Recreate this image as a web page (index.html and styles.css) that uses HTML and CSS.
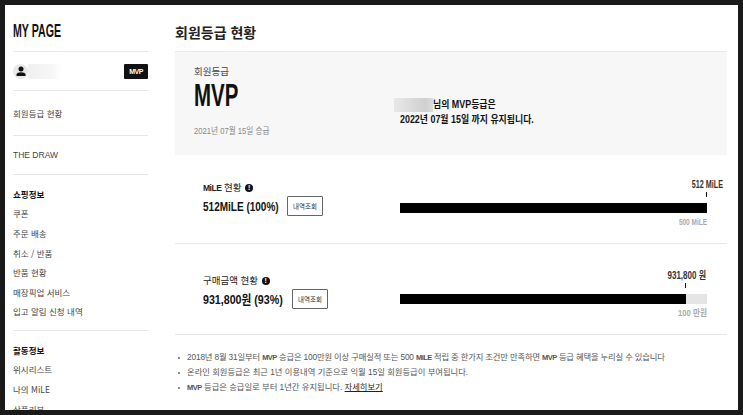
FILE: index.html
```html
<!DOCTYPE html>
<html lang="ko">
<head>
    <meta charset="UTF-8">
    <meta name="viewport" content="width=device-width, initial-scale=1.0">
    <title>MY PAGE</title>
    <link rel="stylesheet" href="styles.css">
</head>
<body>
    <div class="page">
        <aside class="sidebar">
            <h2 class="side-title"><span>MY PAGE</span></h2>
            <div class="profile">
                <span class="avatar">
                    <svg width="10" height="10" viewBox="0 0 10 10"><circle cx="5" cy="3" r="2.5" fill="#111"/><path d="M0.5 10V8.6C0.5 7 3 6.3 5 6.3S9.5 7 9.5 8.6V10Z" fill="#111"/></svg>
                </span>
                <span class="blur-name"></span>
                <span class="badge">MVP</span>
            </div>
            <div class="side-block single"><a>회원등급 현황</a></div>
            <div class="side-block single draw"><a>THE DRAW</a></div>
            <div class="side-block">
                <h3>쇼핑정보</h3>
                <a>쿠폰</a>
                <a>주문 배송</a>
                <a>취소 / 반품</a>
                <a>반품 현황</a>
                <a>매장픽업 서비스</a>
                <a>입고 알림 신청 내역</a>
            </div>
            <div class="side-block">
                <h3>활동정보</h3>
                <a>위시리스트</a>
                <a>나의 MiLE</a>
                <a>상품리뷰</a>
            </div>
        </aside>

        <main class="content">
            <h1 class="page-title">회원등급 현황</h1>

            <section class="hero">
                <div class="hero-left">
                    <p class="hero-label">회원등급</p>
                    <p class="hero-grade">MVP</p>
                    <p class="hero-date">2021년 07월 15일 승급</p>
                </div>
                <div class="hero-right">
                    <div class="hero-first">
                        <span class="blur-name wide"></span>
                        <p class="hero-line short">님의 MVP등급은</p>
                    </div>
                    <p class="hero-line">2022년 07월 15일 까지 유지됩니다.</p>
                </div>
            </section>

            <section class="stat stat-mile">
                <div class="stat-info">
                    <p class="stat-label"><span class="latin">MiLE</span> 현황 <i class="info">!</i></p>
                    <div class="stat-value">
                        <strong>512MiLE (100%)</strong>
                        <button class="history-btn">내역조회</button>
                    </div>
                </div>
                <div class="stat-graph">
                    <p class="graph-now mile-now">512 MiLE</p>
                    <div class="track">
                        <div class="fill" style="width: 100%"><span class="tick"></span></div>
                    </div>
                    <p class="graph-goal">500 MiLE</p>
                </div>
            </section>

            <section class="stat stat-buy">
                <div class="stat-info">
                    <p class="stat-label">구매금액 현황 <i class="info">!</i></p>
                    <div class="stat-value">
                        <strong>931,800원 (93%)</strong>
                        <button class="history-btn">내역조회</button>
                    </div>
                </div>
                <div class="stat-graph">
                    <p class="graph-now buy-now">931,800 원</p>
                    <div class="track">
                        <div class="fill" style="width: 93%"><span class="tick"></span></div>
                    </div>
                    <p class="graph-goal">100 만원</p>
                </div>
            </section>

            <ul class="notes">
                <li>2018년 8월 31일부터 <span class="latin">MVP</span> 승급은 100만원 이상 구매실적 또는 500 <span class="latin">MiLE</span> 적립 중 한가지 조건만 만족하면 <span class="latin">MVP</span> 등급 혜택을 누리실 수 있습니다</li>
                <li>온라인 회원등급은 최근 1년 이용내역 기준으로 익월 15일 회원등급이 부여됩니다.</li>
                <li><span class="latin">MVP</span> 등급은 승급일로 부터 1년간 유지됩니다. <a>자세히보기</a></li>
            </ul>
        </main>
    </div>
</body>
</html>
```

FILE: styles.css
```css
* {
    box-sizing: border-box;
}
html, body {
    height: 100%;
    margin: 0;
    overflow: hidden;
}
body {
    background: #1a1a1a;
    padding: 5px;
    font-family: "Liberation Sans", "Noto Sans CJK KR", sans-serif;
    color: #111;
}
p, h1, h2, h3, ul {
    margin: 0;
    padding: 0;
    font-weight: normal;
}
.page {
    display: flex;
    width: 733px;
    height: 405px;
    background: white;
    overflow: hidden;
}
.latin {
    letter-spacing: -0.5px;
    font-size: 0.9em;
    font-weight: bold;
}

/* left menu */
.sidebar {
    width: 135px;
    margin-left: 8px;
    flex-shrink: 0;
}
.side-title {
    height: 47px;
    border-bottom: 1px solid #e8e8e8;
    padding-top: 15px;
    font-size: 18px;
    line-height: 22px;
    font-weight: bold;
    white-space: nowrap;
}
.side-title span {
    display: inline-block;
    transform: scaleX(0.59);
    transform-origin: left;
}
.profile {
    display: flex;
    align-items: center;
    height: 39px;
    border-bottom: 1px solid #e8e8e8;
}
.avatar {
    display: flex;
    align-items: center;
    justify-content: center;
    width: 15px;
    height: 15px;
    border-radius: 50%;
    background: #e8e8e8;
}
.blur-name {
    display: inline-block;
    width: 33px;
    height: 15px;
    background: linear-gradient(90deg, #f0f0f0, #f6f6f6 70%, #fff);
}
.blur-name.wide {
    width: 39px;
    height: 14px;
    background: linear-gradient(90deg, #e8e8e8, #d0d0d0 80%, #dcdcdc);
}
.badge {
    margin-left: auto;
    width: 24px;
    height: 15px;
    background: #111;
    color: white;
    border-radius: 1px;
    font-size: 7px;
    font-weight: bold;
    letter-spacing: -0.5px;
    line-height: 15px;
    text-align: center;
}
.side-block {
    border-bottom: 1px solid #e8e8e8;
    padding: 10px 0 8px;
}
.side-block.single {
    padding: 13px 0 11.4px;
}
.side-block.draw {
    padding: 10px 0 8.4px;
}
.side-block h3 {
    font-size: 8.5px;
    line-height: 19.4px;
    font-weight: bold;
    font-family: "Noto Sans CJK KR", sans-serif;
}
.side-block a {
    display: block;
    font-size: 8.5px;
    line-height: 19.6px;
    color: #444;
    font-family: "Noto Sans CJK KR", sans-serif;
}
.side-block.draw a {
    font-family: "Liberation Sans", sans-serif;
    font-size: 8.5px;
}

/* main area */
.content {
    width: 552px;
    margin-left: 27px;
    flex-shrink: 0;
}
.page-title {
    height: 46px;
    padding-top: 15px;
    font-size: 14px;
    line-height: 24px;
    font-weight: bold;
    font-family: "Noto Sans CJK KR", sans-serif;
    color: #222;
}
.hero {
    display: flex;
    height: 104px;
    border-top: 1px solid #e8e8e8;
    background: #f7f7f7;
    padding: 13px 0 0 19px;
}
.hero-left {
    width: 206px;
}
.hero-label {
    font-size: 9.5px;
    line-height: 14px;
    color: #444;
}
.hero-grade {
    font-size: 32px;
    font-weight: bold;
    line-height: 36px;
    margin-top: -2px;
    white-space: nowrap;
    transform: scaleX(0.64);
    transform-origin: left;
}
.hero-date {
    margin-top: 11px;
    font-size: 9px;
    line-height: 14px;
    color: #888;
    white-space: nowrap;
    transform: scaleX(0.85);
    transform-origin: left;
}
.hero-right {
    padding-top: 32px;
}
.hero-first {
    display: flex;
    align-items: center;
    height: 15px;
    margin-left: -6px;
}
.hero-line {
    font-size: 10px;
    line-height: 15px;
    font-weight: bold;
    white-space: nowrap;
    transform: scaleX(0.89);
    transform-origin: left;
}
.stat {
    display: flex;
    border-bottom: 1px solid #e8e8e8;
    height: 89px;
    padding-left: 28px;
}
.stat-buy {
    height: 91px;
}
.stat-info {
    width: 197px;
    padding-top: 26px;
}
.stat-label {
    font-size: 9.5px;
    line-height: 14px;
    color: #222;
}
.info {
    display: inline-block;
    width: 8px;
    height: 8px;
    margin-left: 1px;
    border-radius: 50%;
    background: #111;
    color: white;
    font-size: 7px;
    font-style: normal;
    font-weight: bold;
    line-height: 8px;
    text-align: center;
    vertical-align: 1px;
}
.stat-value {
    display: flex;
    align-items: center;
    margin-top: 1px;
}
.stat-value strong {
    width: 84px;
    flex-shrink: 0;
    font-size: 13px;
    line-height: 19px;
    white-space: nowrap;
    color: #111;
    transform: scaleX(0.77);
    transform-origin: left;
}
.history-btn {
    width: 36px;
    height: 20px;
    padding: 0;
    border: 1px solid #666;
    border-radius: 1px;
    background: white;
    color: #333;
    font-family: "Noto Sans CJK KR", sans-serif;
    font-size: 6.5px;
}
.stat-graph {
    width: 307px;
    padding-top: 23px;
}
.stat-buy .stat-info {
    padding-top: 30px;
}
.stat-buy .stat-value strong {
    width: 89px;
    transform: scaleX(0.82);
}
.stat-buy .stat-graph {
    padding-top: 25px;
}
.graph-now {
    height: 13px;
    margin-bottom: 12px;
    font-size: 10px;
    line-height: 13px;
    font-weight: bold;
    color: #333;
    white-space: nowrap;
    text-align: right;
    transform: scaleX(0.72);
    transform-origin: right;
}
.mile-now {
    margin-right: -16px;
}
.buy-now {
    margin-right: 1px;
    transform: scaleX(0.8);
}
.track {
    height: 10px;
    background: #e5e5e5;
}
.fill {
    position: relative;
    height: 100%;
    background: black;
}
.tick {
    position: absolute;
    right: 0;
    top: -11px;
    width: 1px;
    height: 5px;
    background: #111;
}
.graph-goal {
    margin-top: 3px;
    font-size: 9px;
    line-height: 13px;
    font-weight: bold;
    text-align: right;
    color: #aaa;
    transform: scaleX(0.72);
    transform-origin: right;
}
.stat-buy .graph-goal {
    transform: scaleX(0.85);
}
.notes {
    list-style: none;
    padding: 15px 0 0 12px;
}
.notes li {
    position: relative;
    font-size: 8.3px;
    line-height: 15px;
    color: #555;
    white-space: nowrap;
}
.notes li:first-child {
    letter-spacing: -0.15px;
}
.notes li::before {
    content: "";
    position: absolute;
    left: -9px;
    top: 7px;
    width: 2px;
    height: 2px;
    background: #666;
    border-radius: 50%;
}
.notes a {
    color: #222;
    text-decoration: underline;
}
```
